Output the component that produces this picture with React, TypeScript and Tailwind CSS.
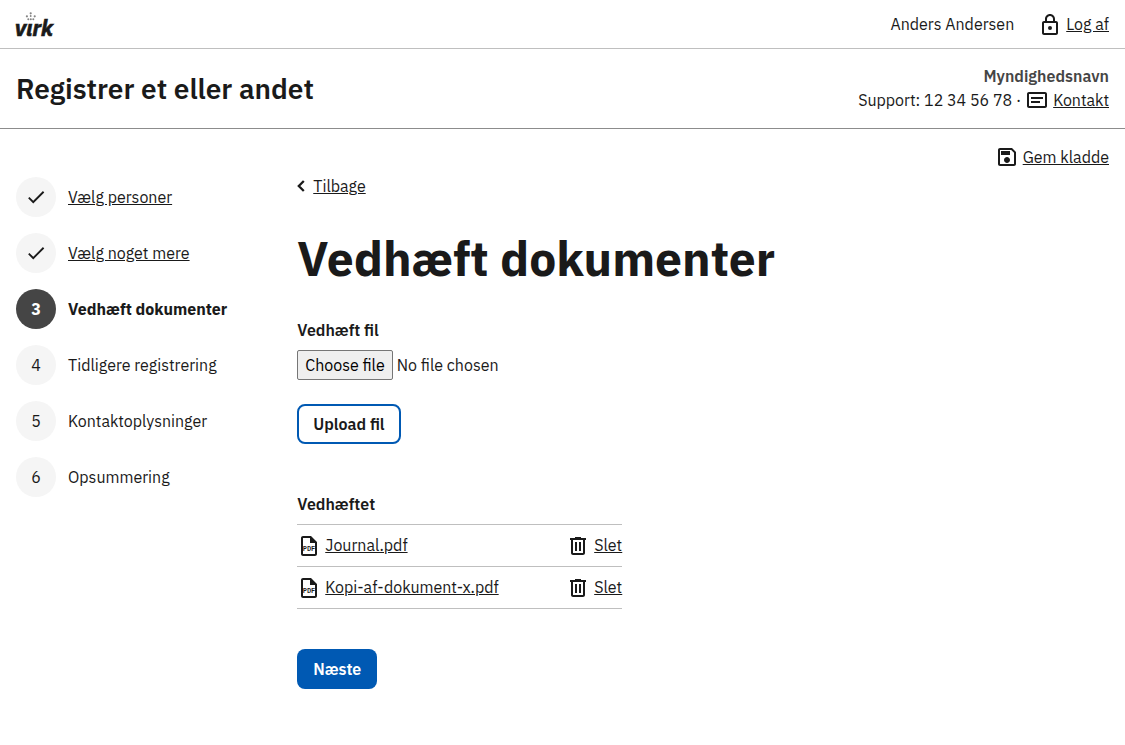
import { useState } from 'react';
import type { ReactNode } from 'react';

const steps = [
  { label: 'Vælg personer', state: 'done' },
  { label: 'Vælg noget mere', state: 'done' },
  { label: 'Vedhæft dokumenter', state: 'current' },
  { label: 'Tidligere registrering', state: 'todo' },
  { label: 'Kontaktoplysninger', state: 'todo' },
  { label: 'Opsummering', state: 'todo' },
];

const files = ['Journal.pdf', 'Kopi-af-dokument-x.pdf'];

function Icon({ children, className = 'size-6' }: { children: ReactNode; className?: string }) {
  return (
    <svg viewBox="0 0 24 24" fill="currentColor" aria-hidden="true" className={`${className} shrink-0`}>
      {children}
    </svg>
  );
}

function LockIcon() {
  return (
    <Icon>
      <circle cx="12" cy="16" r="2" />
      <path d="M18 9h-1V7c0-2.760-2.240-5-5-5S7 4.240 7 7v2H6c-1.100 0-2 .9-2 2v10c0 1.100.9 2 2 2h12c1.100 0 2-.9 2-2V11c0-1.100-.9-2-2-2zM9 7c0-1.660 1.340-3 3-3s3 1.340 3 3v2H9V7zm9 14H6V11h12v10z" />
    </Icon>
  );
}

function ContactIcon() {
  return (
    <Icon>
      <path d="M20 4H4c-1.100 0-2 .9-2 2v12c0 1.100.9 2 2 2h16c1.100 0 2-.9 2-2V6c0-1.100-.9-2-2-2zm0 14H4V6h16v12z" />
      <path d="M6 9h12v2H6zM6 13h9v2H6z" />
    </Icon>
  );
}

function SaveIcon() {
  return (
    <Icon>
      <path d="M17 3H5c-1.110 0-2 .9-2 2v14c0 1.100.89 2 2 2h14c1.100 0 2-.9 2-2V7l-4-4zm2 16H5V5h11.170L19 7.830V19zm-7-7c-1.660 0-3 1.340-3 3s1.340 3 3 3 3-1.340 3-3-1.340-3-3-3zM6 6h9v4H6z" />
    </Icon>
  );
}

function CheckIcon() {
  return (
    <Icon className="size-[22px]">
      <path d="M9 16.170 4.830 12l-1.420 1.410L9 19 21 7l-1.410-1.410z" />
    </Icon>
  );
}

function TrashIcon() {
  return (
    <Icon>
      <path d="M9 3h6v1h5v2h-1v13c0 1.100-.9 2-2 2H7c-1.100 0-2-.9-2-2V6H4V4h5zM7 6v13h10V6z" />
      <path d="M9 8h2v9H9zM13 8h2v9h-2z" />
    </Icon>
  );
}

function PdfIcon() {
  return (
    <Icon>
      <path d="M14 2H6c-1.100 0-2 .9-2 2v16c0 1.100.9 2 2 2h12c1.100 0 2-.9 2-2V8l-6-6zM6 4h7v5h5v11H6V4z" />
      <text x="12" y="17" textAnchor="middle" fontSize="7" fontWeight="600" fontFamily="'IBM Plex Mono', 'Liberation Mono', monospace">
        PDF
      </text>
    </Icon>
  );
}

function Logo() {
  return (
    <svg viewBox="0 0 48 32" role="img" aria-label="Virk" className="h-8 w-12 overflow-visible">
      <g fill="#858585">
        <circle cx="14.700" cy="5.300" r="1.100" />
        <circle cx="10.900" cy="8.300" r="1.100" />
        <circle cx="18.700" cy="8.300" r="1.100" />
        <circle cx="14.700" cy="8" r="0.900" />
        <circle cx="12.300" cy="11.200" r="1" />
        <circle cx="14.800" cy="11.300" r="1" />
        <circle cx="17.300" cy="11.200" r="1" />
      </g>
      <text
        x="-1"
        y="28"
        fontSize="22"
        fontWeight="700"
        fontStyle="italic"
        fontFamily="'IBM Plex Sans', 'Noto Sans', sans-serif"
        fill="#1a1a1a"
        stroke="#1a1a1a"
        strokeWidth="0.600"
      >
        vırk
      </text>
    </svg>
  );
}

export default function App() {
  const [chosen, setChosen] = useState('No file chosen');

  return (
    <div className="bg-white font-['IBM_Plex_Sans','Noto_Sans',sans-serif] text-base text-[#1a1a1a]">
      <header>
        <div className="flex h-[49px] items-center justify-between border-b border-[#bfbfbf] px-4">
          <a href="#forside">
            <Logo />
          </a>
          <div className="flex items-center gap-6">
            <span>Anders Andersen</span>
            <a href="#log-af" className="flex items-center gap-1">
              <LockIcon />
              <span className="underline">Log af</span>
            </a>
          </div>
        </div>
        <div className="flex items-center justify-between border-b border-[#8c8c8c] px-4 pt-[15px] pb-4">
          <p className="pt-0.5 text-[28px] leading-8 font-semibold">Registrer et eller andet</p>
          <div className="text-right">
            <p className="font-semibold text-[#454545]">Myndighedsnavn</p>
            <p className="flex items-center justify-end gap-1">
              <span>Support: 12 34 56 78 ·</span>
              <a href="#kontakt" className="flex items-center gap-1">
                <ContactIcon />
                <span className="underline">Kontakt</span>
              </a>
            </p>
          </div>
        </div>
      </header>

      <div className="flex justify-end px-4 pt-4">
        <a href="#gem-kladde" className="flex items-center gap-1">
          <SaveIcon />
          <span className="underline">Gem kladde</span>
        </a>
      </div>

      <div className="flex">
        <nav aria-label="Trin" className="w-1/4 px-4 pt-2">
          <ol className="flex flex-col gap-4">
            {steps.map((step, i) => (
              <li key={step.label} className="flex items-center gap-3" aria-current={step.state === 'current' ? 'step' : undefined}>
                <span
                  className={`flex size-10 shrink-0 items-center justify-center rounded-full ${
                    step.state === 'current' ? 'bg-[#454545] font-bold text-white' : 'bg-[#f5f5f5]'
                  }`}
                >
                  {step.state === 'done' ? <CheckIcon /> : i + 1}
                </span>
                {step.state === 'done' ? (
                  <a href={`#trin-${i + 1}`} className="whitespace-nowrap underline">
                    {step.label}
                  </a>
                ) : (
                  <span className={`whitespace-nowrap ${step.state === 'current' ? 'font-bold' : ''}`}>{step.label}</span>
                )}
              </li>
            ))}
          </ol>
        </nav>

        <main className="w-3/4 px-4 pt-[5px] pb-14">
          <a href="#tilbage" className="flex w-fit items-center gap-2">
            <svg viewBox="0 0 8 12" fill="none" stroke="currentColor" strokeWidth="2.300" aria-hidden="true" className="h-3 w-2">
              <path d="M6.800 1 1.800 6l5 5" />
            </svg>
            <span className="underline">Tilbage</span>
          </a>

          <h1 className="mt-8 text-5xl leading-[56px] font-bold">Vedhæft dokumenter</h1>

          <form className="mt-8" onSubmit={(e) => e.preventDefault()}>
            <label htmlFor="fil" className="block font-semibold">
              Vedhæft fil
            </label>
            <div className="relative mt-2 flex items-center gap-1">
              <input
                id="fil"
                type="file"
                className="peer sr-only"
                onChange={(e) => setChosen(e.target.files?.[0]?.name ?? 'No file chosen')}
              />
              <label
                htmlFor="fil"
                className="flex h-[30px] items-center rounded-xs border border-[#767676] bg-[#efefef] px-[7px] text-black peer-focus-visible:outline-2"
              >
                Choose file
              </label>
              <span>{chosen}</span>
            </div>
            <button type="submit" className="mt-6 h-10 rounded-lg border-2 border-[#0059b3] px-3.5 font-semibold">
              Upload fil
            </button>
          </form>

          <table className="mt-12 w-[325px] border-collapse">
            <caption className="pb-2 text-left font-semibold">Vedhæftet</caption>
            <tbody>
              {files.map((file) => (
                <tr key={file} className="h-[42px] border-y border-[#bfbfbf]">
                  <td>
                    <a href={`#${file}`} className="flex h-6 items-center gap-1">
                      <PdfIcon />
                      <span className="pb-0.5 underline">{file}</span>
                    </a>
                  </td>
                  <td>
                    <button type="button" className="ml-auto flex h-6 items-center gap-1">
                      <TrashIcon />
                      <span className="pb-0.5 underline">Slet</span>
                    </button>
                  </td>
                </tr>
              ))}
            </tbody>
          </table>

          <button type="button" className="mt-10 block h-10 rounded-lg bg-[#0059b3] px-4 font-semibold text-white">
            Næste
          </button>
        </main>
      </div>
    </div>
  );
}
